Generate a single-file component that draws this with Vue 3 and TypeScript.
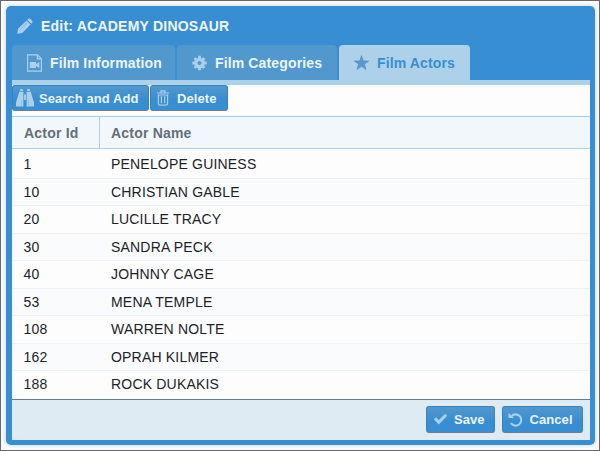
<script setup lang="ts">
import { ref } from 'vue'

interface Actor {
  id: number
  name: string
}

const tabs: string[] = ['Film Information', 'Film Categories', 'Film Actors']
const activeTab = ref<number>(2)

const actors: Actor[] = [
  { id: 1, name: 'PENELOPE GUINESS' },
  { id: 10, name: 'CHRISTIAN GABLE' },
  { id: 20, name: 'LUCILLE TRACY' },
  { id: 30, name: 'SANDRA PECK' },
  { id: 40, name: 'JOHNNY CAGE' },
  { id: 53, name: 'MENA TEMPLE' },
  { id: 108, name: 'WARREN NOLTE' },
  { id: 162, name: 'OPRAH KILMER' },
  { id: 188, name: 'ROCK DUKAKIS' },
]
</script>

<template>
  <div class="page">
    <section class="window">
      <header class="title">
        <svg class="pencil" viewBox="0 0 16 16">
          <path d="M.3 15.7 1 10.8 9.6 2.4 13.6 6.4 5.2 15ZM10.3 1.7 11.5.7Q12.3 0 13.1.8L15.2 2.9Q16 3.7 15.3 4.5L14.3 5.7Z" />
          <path class="groove" d="M3.4 11.6 10 5.2" />
        </svg>
        <span>Edit: ACADEMY DINOSAUR</span>
      </header>
      <nav class="tabs">
        <button
          v-for="(tab, i) in tabs"
          :key="tab"
          class="tab"
          :class="['tab-' + i, { active: activeTab === i }]"
          @click="activeTab = i"
        >
          <svg v-if="i === 0" class="tab-icon" viewBox="0 0 15 18">
            <path class="outline" d="M.6 .8H10.4L14.4 4.8V17.2H.6ZM10.4 .8V4.8H14.4" />
            <path d="M2.8 8H9V10L12.4 8V14L9 12V14H2.8Z" />
          </svg>
          <svg v-else-if="i === 1" class="tab-icon" viewBox="0 0 16 18">
            <path class="ring" d="M8 5.1A3.9 3.9 0 1 1 7.99 5.1Z" />
            <path class="teeth" d="M8 1.3V4M8 14V16.7M.3 9H3M13 9H15.7M2.8 3.8 4.5 5.5M11.5 12.5 13.2 14.2M13.2 3.8 11.5 5.5M4.5 12.5 2.8 14.2" />
          </svg>
          <svg v-else class="tab-icon star" viewBox="0 0 16 18">
            <path d="M8 1 10 6.7 15.8 6.8 11.2 10.3 12.9 16 8 12.7 3.1 16 4.8 10.3.2 6.8 6 6.7Z" />
          </svg>
          <span>{{ tab }}</span>
        </button>
      </nav>
      <div class="strip"></div>
      <main class="body">
        <div class="toolbar">
          <button class="btn search">
            <svg class="binoculars" viewBox="0 0 18 18">
              <path d="M4.2 0H6.8V2H4.2ZM11.2 0H13.8V2H11.2ZM3.2 2.8H7.4V17.5H0V13.5L2.3 6ZM10.6 2.8H14.8L15.7 6 18 13.5V17.5H10.6ZM8.1 5.5H9.9V11H8.1Z" />
              <path class="slit" d="M5.7 11V17.5M12.3 11V17.5" />
            </svg>
            <span>Search and Add</span>
          </button>
          <button class="btn delete">
            <svg class="trash" viewBox="0 0 12 16">
              <path class="outline" d="M0 3H12M4 2.7V.8H8V2.7M1.4 5H10.6V13.3Q10.6 15.2 8.9 15.2H3.1Q1.4 15.2 1.4 13.3ZM4.4 6.3V13.3M7.6 6.3V13.3" />
            </svg>
            <span>Delete</span>
          </button>
        </div>
        <div class="grid-head">
          <div class="col-id">Actor Id</div>
          <div class="col-name">Actor Name</div>
        </div>
        <div class="rows">
          <div v-for="actor in actors" :key="actor.id" class="row">
            <div class="cell-id">{{ actor.id }}</div>
            <div class="cell-name">{{ actor.name }}</div>
          </div>
        </div>
      </main>
      <footer class="footer">
        <button class="btn save">
          <svg class="check" viewBox="0 0 16 14">
            <path d="M.8 7 3.3 4.5 6.2 7.5 13 .8 15.2 3 6.2 12.3Z" />
          </svg>
          <span>Save</span>
        </button>
        <button class="btn cancel">
          <svg class="undo" viewBox="0 0 16 16">
            <path class="arc" d="M4 4.2A6 6 0 1 1 3.1 11.7" />
            <path d="M.5.8V6.5H6.5Z" />
          </svg>
          <span>Cancel</span>
        </button>
      </footer>
    </section>
  </div>
</template>

<style>
body {
  overflow: hidden;
}
</style>

<style scoped>
* {
  box-sizing: border-box;
}
.page {
  width: 600px;
  height: 451px;
  padding: 5px 4px 4px 5px;
  border: 1px solid #68686c;
  background: #fafbfc;
  font-family: "Liberation Sans", Arial, sans-serif;
  font-size: 14px;
}
.window {
  width: 589px;
  height: 439px;
  padding: 0 5px 5px 6px;
  display: flex;
  flex-direction: column;
  background: #388ed2;
  border-radius: 5px;
  box-shadow: 0 0 4px #b9d5ea;
}
svg {
  flex: none;
  fill: #add0ea;
  overflow: visible;
}
span {
  white-space: nowrap;
}
button {
  border: 0;
  margin: 0;
  padding: 0;
  font: inherit;
  font-weight: bold;
  display: flex;
  align-items: center;
}
.title {
  height: 39px;
  padding-left: 5px;
  display: flex;
  align-items: center;
  color: #f2f7fb;
  font-weight: bold;
  letter-spacing: 0.22px;
}
.pencil {
  width: 16px;
  height: 16px;
  margin-right: 8px;
}
.groove {
  fill: none;
  stroke: #7fb5df;
  stroke-width: 0.8;
}
.tabs {
  height: 35px;
  display: flex;
  gap: 2px;
}
.tab {
  padding-left: 15px;
  background: #5198ce;
  border-radius: 4px 4px 0 0;
  color: #edf5fb;
  letter-spacing: 0.14px;
}
.tab-0 { width: 163px; }
.tab-1 { width: 160px; }
.tab-2 { width: 131px; }
.tab-icon {
  width: 15px;
  height: 18px;
  margin-right: 8px;
}
.active {
  background: #aed1ea;
  color: #388ed2;
}
.star {
  fill: #5599cf;
  stroke: #4c8dc0;
  stroke-width: 0.5;
}
.outline {
  fill: none;
  stroke: #add0ea;
  stroke-width: 1.2;
}
.ring {
  fill: none;
  stroke: #add0ea;
  stroke-width: 3.6;
}
.teeth {
  stroke: #add0ea;
  stroke-width: 3;
}
.strip {
  height: 5px;
  background: #aed1ea;
}
.body {
  height: 315px;
  background: #fdfdfd;
  border-bottom: 1px solid #627d8d;
}
.toolbar {
  height: 31px;
  display: flex;
  gap: 1px;
}
.btn {
  height: 27px;
  color: #edf5fb;
  font-size: 13px;
  letter-spacing: 0.08px;
  border: 1px solid #3b82b9;
  border-bottom-color: #727d88;
  border-radius: 3px;
  background: linear-gradient(#5298ce 0, #388ed2 55%);
}
.toolbar .btn {
  height: 26px;
}
.search {
  width: 137px;
  padding-left: 3px;
}
.binoculars {
  width: 18px;
  height: 18px;
  margin-right: 5px;
}
.slit {
  stroke: #7fb5df;
  stroke-width: 0.8;
}
.delete {
  width: 78px;
  padding-left: 6px;
}
.trash {
  width: 12px;
  height: 16px;
  margin-right: 8px;
}
.grid-head {
  height: 33px;
  display: flex;
  border-top: 1px solid #add0e8;
  border-bottom: 1px solid #add0e8;
  background: #f2f7fb;
  color: #627079;
  font-weight: bold;
  line-height: 32px;
  letter-spacing: 0.2px;
}
.col-id {
  width: 88px;
  padding-left: 12px;
  border-right: 1px solid #add0e8;
}
.col-name {
  padding-left: 11px;
}
.rows {
  padding-top: 2px;
}
.row {
  height: 27.5px;
  display: flex;
  align-items: center;
  color: #1c2328;
  border-bottom: 1px solid #edf2f5;
  letter-spacing: 0.19px;
}
.row:last-child {
  border-bottom-color: transparent;
}
.row:nth-child(even) {
  background: #f9fbfc;
}
.cell-id {
  width: 99px;
  padding-left: 11.5px;
}
.footer {
  height: 40px;
  padding: 6px 7px 0 0;
  display: flex;
  justify-content: flex-end;
  gap: 7px;
  background: #deebf3;
}
.save {
  width: 69px;
  padding-left: 6px;
}
.check {
  width: 15px;
  height: 13px;
  margin-right: 6px;
}
.cancel {
  width: 81px;
  padding-left: 5px;
}
.undo {
  width: 15px;
  height: 15px;
  margin-right: 6.5px;
}
.arc {
  fill: none;
  stroke: #add0ea;
  stroke-width: 2.2;
}
</style>
